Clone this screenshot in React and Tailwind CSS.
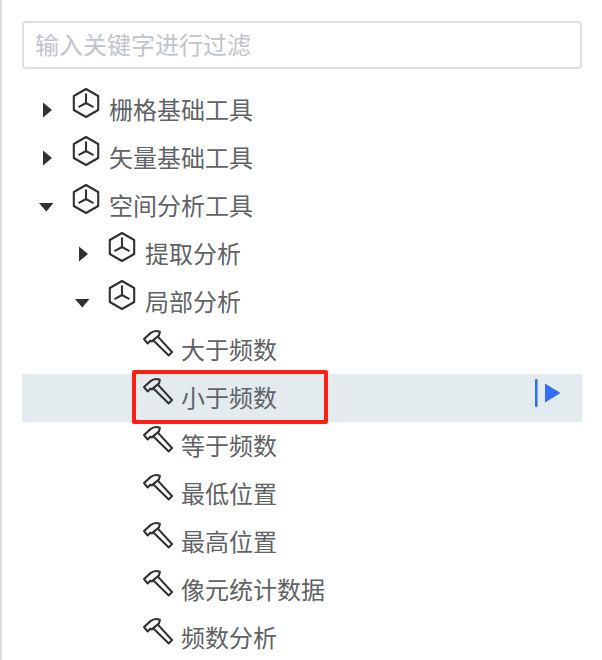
import { useState } from 'react';

const tools = [
  { id: 'raster', label: '栅格基础工具', children: [] },
  { id: 'vector', label: '矢量基础工具', children: [] },
  {
    id: 'spatial',
    label: '空间分析工具',
    children: [
      { id: 'extract', label: '提取分析', children: [] },
      {
        id: 'local',
        label: '局部分析',
        children: [
          { id: 'greater', label: '大于频数' },
          { id: 'less', label: '小于频数', marked: true },
          { id: 'equal', label: '等于频数' },
          { id: 'lowest', label: '最低位置' },
          { id: 'highest', label: '最高位置' },
          { id: 'stats', label: '像元统计数据' },
          { id: 'frequency', label: '频数分析' },
        ],
      },
    ],
  },
];

const indents = ['pl-0', 'pl-9', 'pl-18'];

// Keep a node if it matches, or if anything below it does
function filterNodes(nodes, keyword) {
  if (!keyword) return nodes;
  return nodes.flatMap((node) => {
    if (node.label.includes(keyword)) return [node];
    const children = filterNodes(node.children || [], keyword);
    return children.length ? [{ ...node, children }] : [];
  });
}

function CaretIcon({ open }) {
  return (
    <svg viewBox="0 0 24 24" className="size-6" fill="currentColor" aria-hidden="true">
      <path d={open ? 'M5 9h14.5l-7.2 8.5z' : 'M9 4.5v15l9-7.5z'} />
    </svg>
  );
}

function GroupIcon() {
  return (
    <svg viewBox="0 0 32 32" className="size-8" fill="none" stroke="currentColor" strokeWidth="2.1" aria-hidden="true">
      <path d="M16 2l12.2 7v14L16 30 3.8 23V9z" strokeLinejoin="round" />
      <path d="M16 6.5V16M8.5 20.2L16 16l7.5 4.2" />
    </svg>
  );
}

function HammerIcon() {
  return (
    <svg viewBox="0 0 32 32" className="size-8" fill="none" stroke="currentColor" strokeWidth="2.1" strokeLinejoin="round" aria-hidden="true">
      <path d="M2 12L8.2 6.4C10.8 4.2 14.4 3.4 17.8 4.8L17 8.4 9.8 14.4 8.6 13.6 5.6 16.4z" />
      <path d="M15.6 9.4L30 25 26.8 28.4 11.2 13.2" />
    </svg>
  );
}

function RunIcon() {
  return (
    <svg viewBox="0 0 32 32" className="size-8" fill="currentColor" aria-hidden="true">
      <rect x="3" y="2" width="2.6" height="28" rx="1" />
      <path d="M13 6.5v19L28.5 16z" />
    </svg>
  );
}

function TreeNode({ node, level, expanded, onToggle, selected, onSelect }) {
  const isGroup = Boolean(node.children);
  const isOpen = isGroup && expanded.includes(node.id);
  const isSelected = selected === node.id;

  return (
    <li role="treeitem" aria-expanded={isGroup ? isOpen : undefined} aria-selected={isSelected}>
      <div className={`relative flex h-12 items-center ${indents[level]} ${isSelected ? 'bg-[#e4ebee]' : ''}`}>
        {isGroup ? (
          <button
            type="button"
            aria-label={node.label}
            onClick={() => onToggle(node.id)}
            className="flex w-12 shrink-0 justify-center text-[#303133]"
          >
            <CaretIcon open={isOpen} />
          </button>
        ) : (
          <span className="w-12 shrink-0" />
        )}
        <button
          type="button"
          onClick={() => (isGroup ? onToggle(node.id) : onSelect(node.id))}
          className="flex h-full flex-1 gap-[7px] text-left"
        >
          <span className="shrink-0 pt-px text-[#303133]">
            {isGroup ? <GroupIcon /> : <HammerIcon />}
          </span>
          <span className="leading-[46px]">{node.label}</span>
        </button>
        {isSelected && (
          <button type="button" aria-label="运行" className="mr-[18px] mb-2.5 text-[#3370ff]">
            <RunIcon />
          </button>
        )}
        {node.marked && (
          <span className="pointer-events-none absolute -top-1 -bottom-0.5 left-[110px] w-[196px] rounded-xs border-4 border-[#ff2015]" />
        )}
      </div>
      {isOpen && node.children.length > 0 && (
        <ul role="group">
          {node.children.map((child) => (
            <TreeNode
              key={child.id}
              node={child}
              level={level + 1}
              expanded={expanded}
              onToggle={onToggle}
              selected={selected}
              onSelect={onSelect}
            />
          ))}
        </ul>
      )}
    </li>
  );
}

export default function App() {
  const [keyword, setKeyword] = useState('');
  const [expanded, setExpanded] = useState(['spatial', 'local']);
  const [selected, setSelected] = useState('less');

  const handleToggle = (id) => {
    setExpanded((prev) => (prev.includes(id) ? prev.filter((item) => item !== id) : [...prev, id]));
  };

  return (
    <div className="h-screen overflow-hidden border-l-2 border-[#dcdcdc] bg-white px-5 pt-[21px] font-['Noto_Sans_CJK_SC',sans-serif] text-2xl text-[#606266]">
      {/* Filter */}
      <input
        type="text"
        aria-label="输入关键字进行过滤"
        placeholder="输入关键字进行过滤"
        value={keyword}
        onChange={(e) => setKeyword(e.target.value)}
        className="block h-12 w-full rounded border-2 border-[#dcdfe6] px-[11px] pb-1 outline-none placeholder:text-[#c0c4cc]"
      />

      {/* Tool tree */}
      <ul role="tree" className="mt-[17px]">
        {filterNodes(tools, keyword).map((node) => (
          <TreeNode
            key={node.id}
            node={node}
            level={0}
            expanded={expanded}
            onToggle={handleToggle}
            selected={selected}
            onSelect={setSelected}
          />
        ))}
      </ul>
    </div>
  );
}
